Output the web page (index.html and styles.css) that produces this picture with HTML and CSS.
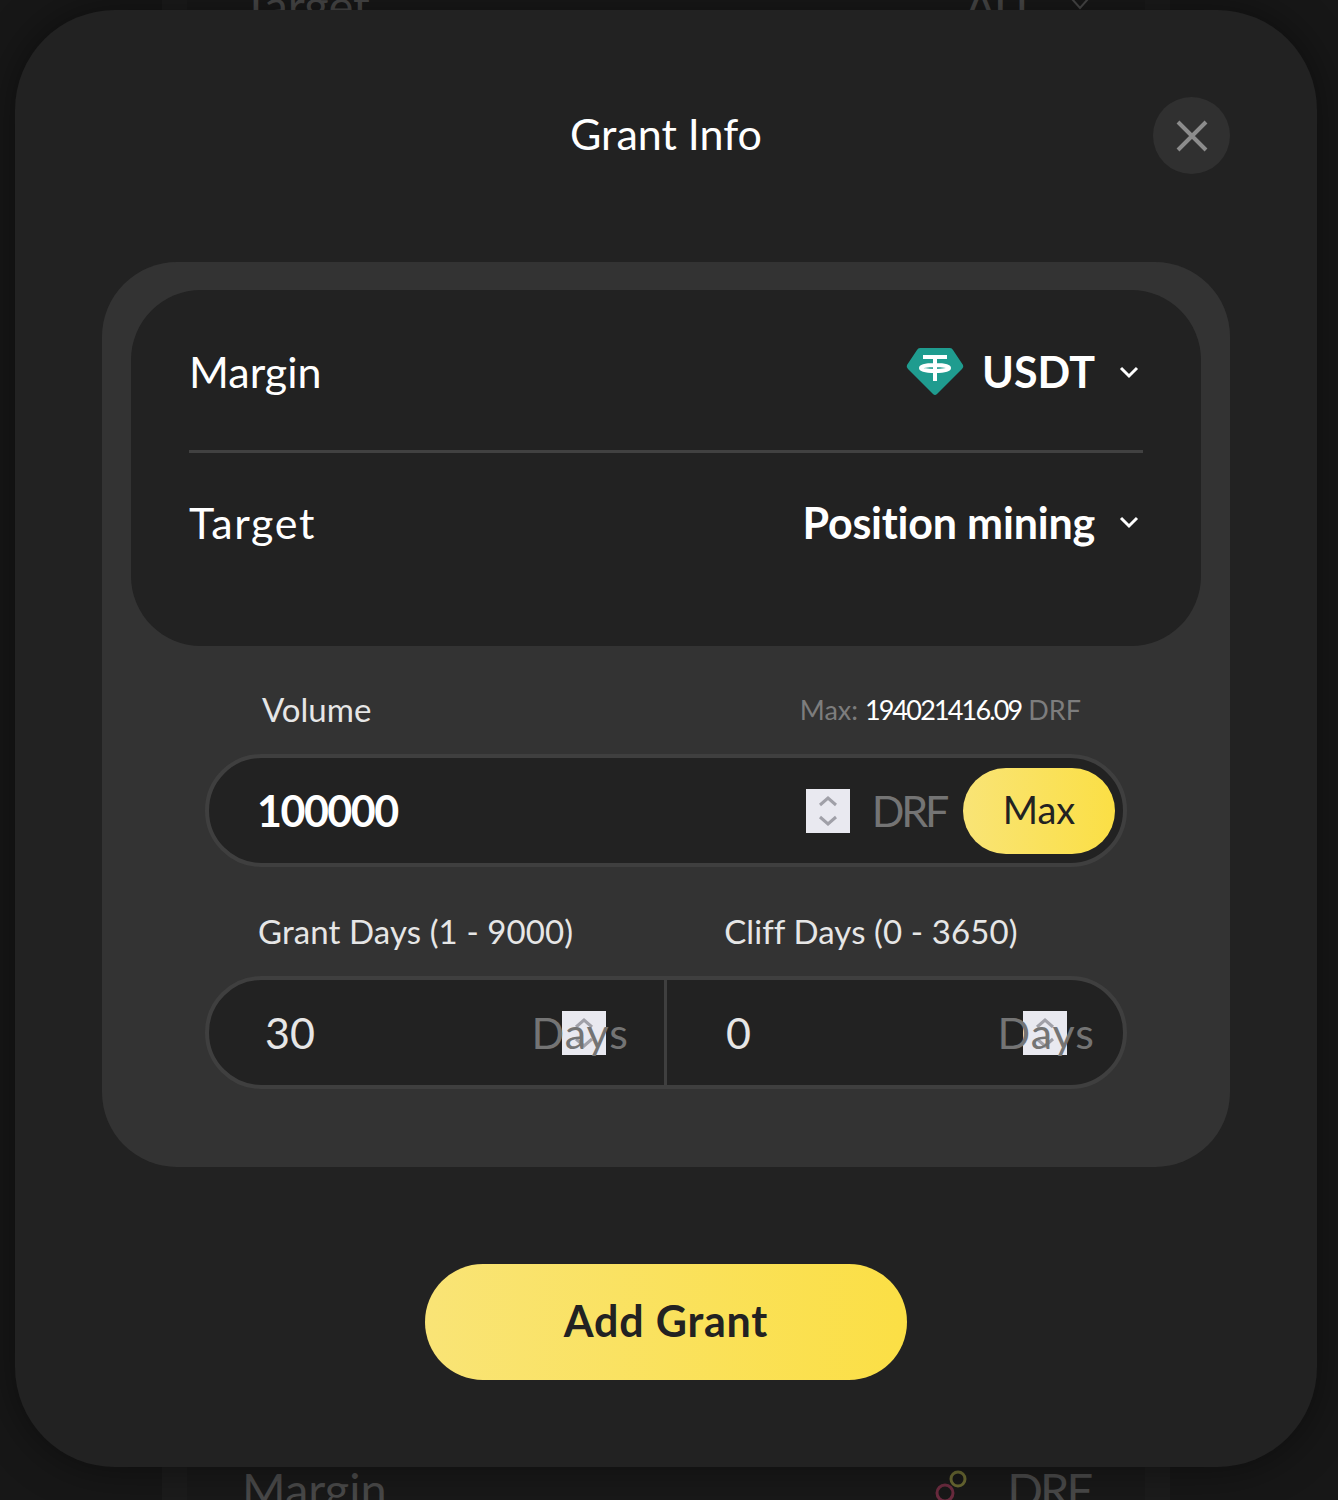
FILE: index.html
```html
<!DOCTYPE html>
<html lang="en">
<head>
  <meta charset="UTF-8">
  <title>Grant Info</title>
  <link rel="stylesheet" href="styles.css">
</head>
<body>
  <div class="page">
    <div class="page-col">
      <div class="page-row page-row-top">
        <span>Target</span>
        <span class="page-pick">ALL
          <svg class="page-chev" viewBox="0 0 20 20"><path d="M2 4 L10 13 L18 4" /></svg>
        </span>
      </div>
      <div class="page-row page-row-bottom">
        <span>Margin</span>
        <span class="page-pick">
          <svg class="page-coin" viewBox="0 0 40 40">
            <circle cx="27" cy="10" r="7" stroke="#6b6a33" />
            <circle cx="14" cy="24" r="8" stroke="#6d2c40" />
          </svg>
          DRF
        </span>
      </div>
    </div>
  </div>

  <div class="modal">
    <div class="modal-head">
      <span></span>
      <h2 class="modal-title">Grant Info</h2>
      <button class="close">
        <svg viewBox="0 0 32 32"><path d="M2 2 L30 30 M30 2 L2 30" /></svg>
      </button>
    </div>

    <div class="panel">
      <div class="pick-box">
        <div class="pick-row pick-row-first">
          <span class="pick-label">Margin</span>
          <span class="pick-value">
            <svg class="usdt" viewBox="0 0 58 49">
              <path class="usdt-gem" d="M14 1 H44 Q46 1 47 3 L57 18 Q58 20 56 22 L31 47 Q29 49 27 47 L2 22 Q0 20 1 18 L11 3 Q12 1 14 1 Z" />
              <path class="usdt-mark" d="M17 10 H41 M29 10 V34 M15 21 C15 17 43 17 43 21 C43 25 15 25 15 21 Z" />
            </svg>
            USDT
            <svg class="chev" viewBox="0 0 20 14"><path d="M2 3 L10 11 L18 3" /></svg>
          </span>
        </div>
        <div class="pick-row pick-row-target">
          <span class="pick-label">Target</span>
          <span class="pick-value">Position mining
            <svg class="chev" viewBox="0 0 20 14"><path d="M2 3 L10 11 L18 3" /></svg>
          </span>
        </div>
      </div>

      <div class="fields">
        <div class="label-row label-row-volume">
          <span>Volume</span>
          <span class="max-note">Max: <b>194021416.09</b> DRF</span>
        </div>
        <div class="pill pill-volume">
          <span class="volume-num">100000</span>
          <span class="spin">
            <svg viewBox="0 0 44 44"><path d="M14 16 L22 9 L30 16 M14 28 L22 35 L30 28" /></svg>
          </span>
          <span class="unit">DRF</span>
          <button class="max-btn">Max</button>
        </div>

        <div class="label-row label-row-days">
          <span>Grant Days (1 - 9000)</span>
          <span>Cliff Days (0 - 3650)</span>
        </div>
        <div class="pill pill-days">
          <div class="day-cell day-cell-grant">
            <span class="day-num">30</span>
            <span class="unit">Days</span>
            <span class="spin spin-over">
              <svg viewBox="0 0 44 44"><path d="M14 16 L22 9 L30 16 M14 28 L22 35 L30 28" /></svg>
            </span>
          </div>
          <div class="day-cell day-cell-cliff">
            <span class="day-num">0</span>
            <span class="unit">Days</span>
            <span class="spin spin-over">
              <svg viewBox="0 0 44 44"><path d="M14 16 L22 9 L30 16 M14 28 L22 35 L30 28" /></svg>
            </span>
          </div>
        </div>
      </div>
    </div>

    <button class="add-btn">Add Grant</button>
  </div>
</body>
</html>
```

FILE: styles.css
```css
* { box-sizing: border-box; }
body { margin: 0; background: #171717; font-family: "Lato", "Liberation Sans", sans-serif; color: #fff; }
button { font-family: inherit; border: 0; padding: 0; }

/* dimmed page behind the dialog */
.page { height: 1500px; overflow: hidden; }
.page-col { width: 1008px; height: 1550px; margin: -25px 0 0 162px; padding: 0 25px; background: #1c1c1c; }
.page-row { display: flex; justify-content: space-between; height: 60px; align-items: center; padding: 0 55px; background: #191919; font-size: 47px; color: #4a4a4a; }
.page-row-bottom { margin-top: 1424px; }
.page-pick { display: flex; align-items: center; gap: 33px; letter-spacing: -2.5px; }
.page-row-bottom .page-pick { gap: 36px; letter-spacing: -3px; }
.page-chev { width: 20px; height: 20px; fill: none; stroke: #4a4a4a; stroke-width: 2; }
.page-coin { width: 40px; height: 40px; fill: none; stroke-width: 3; }

.modal { position: absolute; left: 15px; top: 10px; width: 1302px; height: 1457px; padding: 87px 87px 0; background: #222; border-radius: 100px; box-shadow: 0 0 45px rgba(0, 0, 0, .45); }
.modal-head { display: grid; grid-template-columns: 1fr auto 1fr; align-items: center; height: 77px; }
.modal-title { margin: 0; padding-bottom: 4px; font-size: 43px; font-weight: 400; color: #fff; }
.close { justify-self: end; display: flex; align-items: center; justify-content: center; width: 77px; height: 77px; border-radius: 50%; background: #303030; }
.close svg { width: 32px; height: 32px; fill: none; stroke: #8c8c8c; stroke-width: 4; }

.panel { height: 905px; margin-top: 88px; padding: 28px 29px 0; background: #333; border-radius: 75px; }
.pick-box { height: 356px; padding: 0 58px; background: #222; border-radius: 70px; }
.pick-row { display: flex; justify-content: space-between; align-items: center; height: 138px; }
.pick-row-first { height: 163px; padding-top: 3px; border-bottom: 3px solid #414141; }
.pick-row-target .pick-label { letter-spacing: 1.7px; }
.pick-label { font-size: 43px; }
.pick-value { display: flex; align-items: center; font-size: 43px; font-weight: 700; }
.pick-row-target .pick-value { letter-spacing: -.2px; }
.usdt { width: 58px; height: 49px; margin-right: 18px; }
.usdt-gem { fill: #1f9c8f; }
.usdt-mark { fill: none; stroke: #fff; stroke-width: 4; }
.chev { width: 20px; height: 14px; margin: 0 4px 0 24px; fill: none; stroke: #fff; stroke-width: 3; }

.fields { padding: 40px 74px 0; }
.label-row { display: flex; height: 48px; padding-bottom: 2px; align-items: center; font-size: 33px; color: #e6e6e6; }
.label-row-volume { justify-content: space-between; padding: 0 46px 2px 57px; }
.label-row-days { margin-top: 41px; padding-left: 53px; gap: 151px; letter-spacing: .1px; }
.max-note { font-size: 27px; color: #7d7d7d; }
.max-note b { font-weight: 400; letter-spacing: -1.85px; color: #fff; }

.pill { height: 113px; margin-top: 20px; background: #222; border: 4px solid #3f3f3f; border-radius: 57px; }
.pill-volume { display: flex; align-items: center; padding: 0 8px 0 48px; }
.volume-num { flex: 1; font-size: 43px; font-weight: 700; letter-spacing: -1.5px; }
.unit { font-size: 43px; color: #747474; }
.pill-volume .unit { margin-right: 1px; letter-spacing: -3.2px; }
.spin { display: block; width: 44px; height: 44px; margin-right: 22px; background: #e9e9f0; }
.spin svg { display: block; width: 44px; height: 44px; fill: none; stroke: #a0a0a8; stroke-width: 3; }
.max-btn { width: 152px; height: 86px; margin-left: 16px; padding-bottom: 4px; border-radius: 43px; background: linear-gradient(90deg, #f9e476, #fbdf45); color: #222; font-size: 38px; }

.pill-days { display: grid; grid-template-columns: 458px 1fr; }
.day-cell { position: relative; display: flex; justify-content: space-between; align-items: center; }
.day-cell-grant { padding: 0 35px 0 56px; border-right: 3px solid #3f3f3f; }
.day-cell-cliff { padding: 0 28px 0 59px; }
.day-cell .unit { position: relative; z-index: 1; letter-spacing: 1px; }
.day-num { font-size: 43px; color: #e6e6e6; }
.spin-over { position: absolute; top: 31px; margin: 0; }
.day-cell-grant .spin-over { right: 58px; }
.day-cell-cliff .spin-over { right: 56px; }

.add-btn { display: block; width: 482px; height: 116px; margin: 97px auto 0; padding-bottom: 4px; border-radius: 58px; background: linear-gradient(90deg, #f9e476, #fbdf45); color: #222; font-size: 43px; font-weight: 700; letter-spacing: .8px; }
```
